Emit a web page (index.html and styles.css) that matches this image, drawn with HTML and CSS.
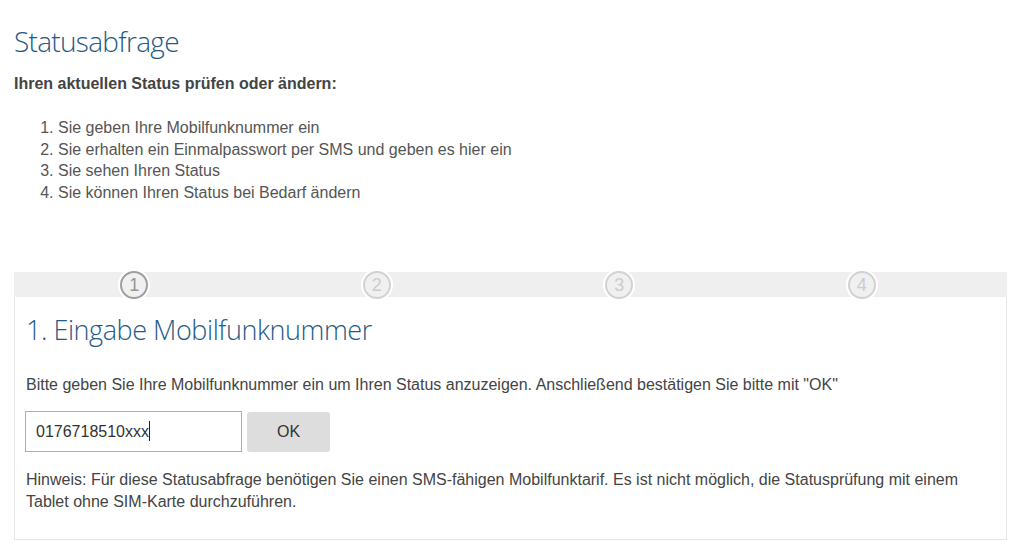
FILE: index.html
```html
<!DOCTYPE html>
<html lang="de">
<head>
<meta charset="utf-8">
<title>Statusabfrage</title>
<link rel="stylesheet" href="styles.css">
</head>
<body>
<div class="page">
  <h1 class="title">Statusabfrage</h1>
  <p class="lead">Ihren aktuellen Status prüfen oder ändern:</p>
  <ol class="steps-list">
    <li>Sie geben Ihre Mobilfunknummer ein</li>
    <li>Sie erhalten ein Einmalpasswort per SMS und geben es hier ein</li>
    <li>Sie sehen Ihren Status</li>
    <li>Sie können Ihren Status bei Bedarf ändern</li>
  </ol>

  <div class="wizard">
    <div class="progress">
      <div class="step"><span class="circle active">1</span></div>
      <div class="step"><span class="circle">2</span></div>
      <div class="step"><span class="circle">3</span></div>
      <div class="step"><span class="circle">4</span></div>
    </div>
    <div class="card">
      <h2 class="card-title">1. Eingabe Mobilfunknummer</h2>
      <p class="text">Bitte geben Sie Ihre Mobilfunknummer ein um Ihren Status anzuzeigen. Anschließend bestätigen Sie bitte mit "OK"</p>
      <div class="form-row">
        <div class="input">0176718510xxx<span class="caret"></span></div>
        <button class="btn" type="button">OK</button>
      </div>
      <p class="note">Hinweis: Für diese Statusabfrage benötigen Sie einen SMS-fähigen Mobilfunktarif. Es ist nicht möglich, die Statusprüfung mit einem Tablet ohne SIM-Karte durchzuführen.</p>
    </div>
  </div>
</div>
</body>
</html>
```

FILE: styles.css
```css
* { box-sizing: border-box; }
html, body { margin: 0; padding: 0; background: #fff; }
body { font-family: "Liberation Sans", Arial, sans-serif; color: #444; }

.page { padding: 0 6px 0 14px; }

.title {
  margin: 0;
  padding-top: 22px;
  font-family: "Open Sans", sans-serif;
  font-weight: 300;
  font-size: 28px;
  letter-spacing: -0.7px;
  line-height: 38px;
  color: #1f5b85;
}

.lead {
  margin: 14px 0 0;
  font-size: 16px;
  font-weight: bold;
  line-height: 19px;
  color: #444;
}

.steps-list {
  margin: 24px 0 0;
  padding-left: 44px;
  font-size: 16px;
  line-height: 21.7px;
  color: #555;
}

.wizard { margin-top: 68px; }

.progress {
  height: 25px;
  background: #efefef;
  display: grid;
  grid-template-columns: repeat(4, 242.5px);
}
.step { display: flex; justify-content: center; transform: translateX(-1px); }
.circle {
  margin-top: -1px;
  width: 28px;
  height: 28px;
  border-radius: 50%;
  border: 2px solid #d2d2d2;
  box-shadow: 0 0 0 2px #fff;
  background: #f0f0f0;
  color: #cccccc;
  font-size: 18px;
  line-height: 24px;
  text-align: center;
  position: relative;
  z-index: 1;
}
.circle.active { border-color: #9f9f9f; color: #959595; }

.card {
  border: 1px solid #e6e6e6;
  border-top: none;
  padding: 14px 10px 26px;
}

.card-title {
  margin: 0;
  padding-left: 1px;
  font-family: "Open Sans", sans-serif;
  font-weight: 300;
  font-size: 27px;
  letter-spacing: -0.45px;
  line-height: 38px;
  color: #1f5b85;
}

.text {
  margin: 25px 0 0;
  padding-left: 1px;
  font-size: 16px;
  line-height: 22px;
  color: #444;
}

.form-row {
  margin-top: 15px;
  display: flex;
  gap: 5px;
}
.input {
  width: 217px;
  height: 41px;
  border: 1px solid #8cb4e2;
  padding: 0 10px;
  font-size: 16px;
  line-height: 39px;
  color: #333;
  display: flex;
  align-items: center;
}
.caret { width: 1px; height: 20px; background: #222; }
.btn {
  width: 83px;
  height: 40px;
  margin-top: 1px;
  border: none;
  border-radius: 3px;
  background: #dddddd;
  font-family: "Liberation Sans", Arial, sans-serif;
  font-size: 16px;
  color: #333;
}

.note {
  margin: 17px 0 0;
  padding-left: 1px;
  font-size: 16px;
  line-height: 22px;
  color: #444;
}
```
